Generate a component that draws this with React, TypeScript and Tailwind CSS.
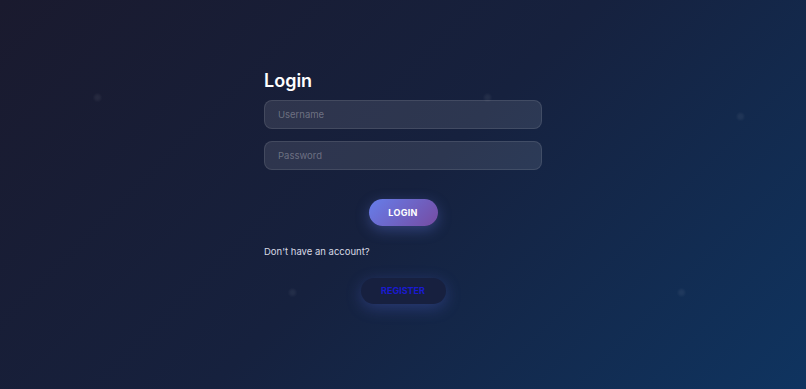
import React from 'react';

const dots = [
  'left-[94px] top-[94px]',
  'left-[484px] top-[94px]',
  'left-[737px] top-[113px]',
  'left-[289px] top-[289px]',
  'left-[678px] top-[289px]',
];

export default function App() {
  return (
    <div
      className="relative h-[389px] w-full overflow-hidden bg-[linear-gradient(135deg,#1a1a2e_0%,#16213e_50%,#0f3460_100%)]"
      style={{ fontFamily: 'Inter, "Noto Sans", sans-serif' }}
    >
      {dots.map((d) => (
        <span key={d} className={`absolute ${d} h-[7px] w-[7px] rounded-full bg-white/[0.06] blur-[1px]`} />
      ))}

      <div className="relative mx-auto flex w-[278px] flex-col pt-[67px]">
        <h1 className="mb-[5px] text-[18px] font-semibold leading-[28px] text-white">Login</h1>

        <input
          type="text"
          placeholder="Username"
          className="h-[29px] w-full rounded-[8px] border border-white/10 bg-white/10 px-[13px] text-[9.5px] text-white outline-none placeholder:text-white/30"
        />
        <input
          type="password"
          placeholder="Password"
          className="mt-[12px] h-[29px] w-full rounded-[8px] border border-white/10 bg-white/10 px-[13px] text-[9.5px] text-white outline-none placeholder:text-white/30"
        />

        <button className="mx-auto mt-[29px] h-[27px] w-[69px] rounded-full bg-[linear-gradient(135deg,#667eea,#764ba2)] text-[9px] font-bold tracking-[0.3px] text-white shadow-[0_4px_14px_rgba(102,126,234,0.35)]">
          LOGIN
        </button>

        <p className="mt-[19px] text-[9.5px] leading-[14px] text-[#d6d9e4]">Don&apos;t have an account?</p>

        <button className="mx-auto mt-[19px] h-[26px] w-[85px] rounded-full bg-[#17203f] text-[9px] font-bold text-[#1a1ad0] shadow-[0_4px_16px_rgba(90,110,230,0.3)]">
          REGISTER
        </button>
      </div>
    </div>
  );
}
